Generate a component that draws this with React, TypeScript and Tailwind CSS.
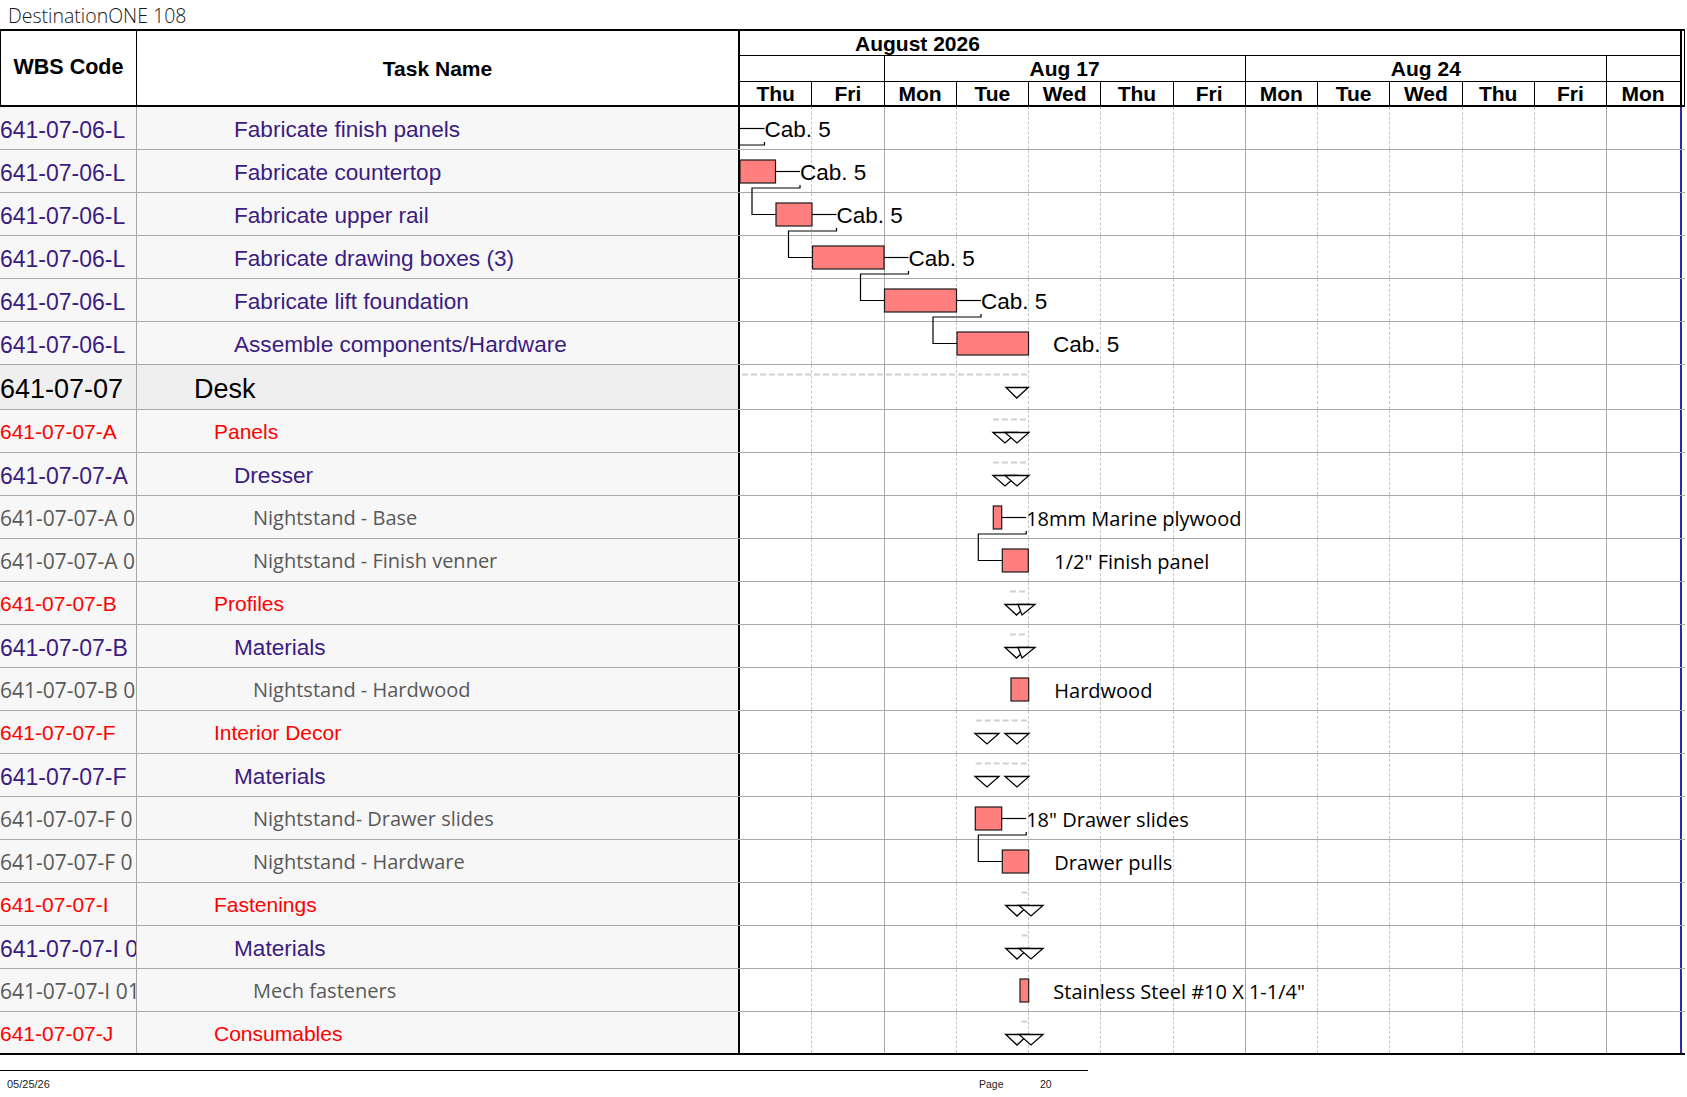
import React from 'react';

type Kind = 'p' | 'desk' | 'red' | 'gray';
type Row = { wbs: string; task: string; kind: Kind; h: number };

const rows: Row[] = [
  { wbs: '641-07-06-L', task: 'Fabricate finish panels', kind: 'p', h: 43 },
  { wbs: '641-07-06-L', task: 'Fabricate countertop', kind: 'p', h: 43 },
  { wbs: '641-07-06-L', task: 'Fabricate upper rail', kind: 'p', h: 43 },
  { wbs: '641-07-06-L', task: 'Fabricate drawing boxes (3)', kind: 'p', h: 43 },
  { wbs: '641-07-06-L', task: 'Fabricate lift foundation', kind: 'p', h: 43 },
  { wbs: '641-07-06-L', task: 'Assemble components/Hardware', kind: 'p', h: 43 },
  { wbs: '641-07-07', task: 'Desk', kind: 'desk', h: 45 },
  { wbs: '641-07-07-A', task: 'Panels', kind: 'red', h: 43 },
  { wbs: '641-07-07-A', task: 'Dresser', kind: 'p', h: 43 },
  { wbs: '641-07-07-A 0', task: 'Nightstand - Base', kind: 'gray', h: 43 },
  { wbs: '641-07-07-A 0', task: 'Nightstand - Finish venner', kind: 'gray', h: 43 },
  { wbs: '641-07-07-B', task: 'Profiles', kind: 'red', h: 43 },
  { wbs: '641-07-07-B', task: 'Materials', kind: 'p', h: 43 },
  { wbs: '641-07-07-B 0', task: 'Nightstand - Hardwood', kind: 'gray', h: 43 },
  { wbs: '641-07-07-F', task: 'Interior Decor', kind: 'red', h: 43 },
  { wbs: '641-07-07-F', task: 'Materials', kind: 'p', h: 43 },
  { wbs: '641-07-07-F 0', task: 'Nightstand- Drawer slides', kind: 'gray', h: 43 },
  { wbs: '641-07-07-F 0', task: 'Nightstand - Hardware', kind: 'gray', h: 43 },
  { wbs: '641-07-07-I', task: 'Fastenings', kind: 'red', h: 43 },
  { wbs: '641-07-07-I 01', task: 'Materials', kind: 'p', h: 43 },
  { wbs: '641-07-07-I 01', task: 'Mech fasteners', kind: 'gray', h: 43 },
  { wbs: '641-07-07-J', task: 'Consumables', kind: 'red', h: 43 },
];

const wbsClass: Record<Kind, string> = {
  p: "pt-[4px] text-[#3b1c80] text-[23px] font-['Liberation_Sans',Arial,sans-serif]",
  desk: "pt-[4px] text-black text-[27px] font-['Liberation_Sans',Arial,sans-serif]",
  red: "pt-[1px] text-[#ff0000] text-[21px] font-['Liberation_Sans',Arial,sans-serif]",
  gray: "pt-[2px] text-[#595959] text-[21px] font-['Open_Sans',sans-serif]",
};

const taskClass: Record<Kind, string> = {
  p: "pt-[4px] pl-[97px] text-[#3b1c80] text-[22.6px] font-['Liberation_Sans',Arial,sans-serif]",
  desk: "pt-[4px] pl-[57px] text-black text-[27px] font-['Liberation_Sans',Arial,sans-serif]",
  red: "pt-[1px] pl-[77px] text-[#ff0000] text-[21px] font-['Liberation_Sans',Arial,sans-serif]",
  gray: "pt-[2px] pl-[116px] text-[#595959] text-[20px] font-['Open_Sans',sans-serif]",
};

const days = ['Thu', 'Fri', 'Mon', 'Tue', 'Wed', 'Thu', 'Fri', 'Mon', 'Tue', 'Wed', 'Thu', 'Fri', 'Mon'];

// chart data (page x coordinates)
const bars: Record<number, [number, number]> = {
  1: [740, 775.5],
  2: [776, 812],
  3: [812.5, 884],
  4: [884.5, 956.5],
  5: [957, 1028.5],
  9: [993.3, 1001.7],
  10: [1002.3, 1028.3],
  13: [1011, 1028.7],
  16: [975.3, 1001.7],
  17: [1002.3, 1028.7],
  20: [1020, 1028.7],
};

type Label = { text: string; arial?: boolean; end: number; next?: number; x?: number };
const labels: Record<number, Label> = {
  0: { text: 'Cab. 5', arial: true, end: 740, next: 740 },
  1: { text: 'Cab. 5', arial: true, end: 775.5, next: 776 },
  2: { text: 'Cab. 5', arial: true, end: 812, next: 812.5 },
  3: { text: 'Cab. 5', arial: true, end: 884, next: 884.5 },
  4: { text: 'Cab. 5', arial: true, end: 956.5, next: 957 },
  5: { text: 'Cab. 5', arial: true, end: 1028.5, x: 1053 },
  9: { text: '18mm Marine plywood', end: 1001.7, next: 1002.3 },
  10: { text: '1/2" Finish panel', end: 1028.3, x: 1054.3 },
  13: { text: 'Hardwood', end: 1028.7, x: 1054.3 },
  16: { text: '18" Drawer slides', end: 1001.7, next: 1002.3 },
  17: { text: 'Drawer pulls', end: 1028.7, x: 1054.3 },
  20: { text: 'Stainless Steel #10 X 1-1/4"', end: 1028.7, x: 1053.3 },
};

type Summary = { dash: [number, number]; tris: [number, number, number][] };
const triPanels: [number, number, number][] = [
  [993, 1017, 1005],
  [1005, 1029, 1017],
];
const triProfiles: [number, number, number][] = [
  [1005, 1028, 1016.5],
  [1018, 1035, 1022],
];
const triDecor: [number, number, number][] = [
  [975, 999, 987],
  [1005, 1029, 1017],
];
const triFast: [number, number, number][] = [
  [1005.7, 1028.3, 1017],
  [1019, 1043, 1031],
];
const summaries: Record<number, Summary> = {
  6: { dash: [742, 1029], tris: [[1006, 1028.3, 1016.7]] },
  7: { dash: [993, 1029], tris: triPanels },
  8: { dash: [993, 1029], tris: triPanels },
  11: { dash: [1010, 1028], tris: triProfiles },
  12: { dash: [1010, 1028], tris: triProfiles },
  14: { dash: [975.7, 1029], tris: triDecor },
  15: { dash: [975.7, 1029], tris: triDecor },
  18: { dash: [1021.7, 1027.5], tris: triFast },
  19: { dash: [1021.7, 1027.5], tris: triFast },
  21: { dash: [1021.7, 1027.5], tris: triFast },
};

function Chart() {
  const tops: number[] = [];
  let acc = 0;
  rows.forEach((r) => {
    tops.push(acc);
    acc += r.h;
  });
  const total = acc;
  const els: React.ReactNode[] = [];
  rows.forEach((r, i) => {
    const T = tops[i];
    const c = T + 21.5;
    const s = summaries[i];
    if (s) {
      els.push(
        <line key={`d${i}`} x1={s.dash[0]} x2={s.dash[1]} y1={T + 9.5} y2={T + 9.5} stroke="#cfcfcf" strokeWidth={2} strokeDasharray="6 3" />
      );
      s.tris.forEach((t, k) => {
        els.push(
          <polygon
            key={`t${i}-${k}`}
            points={`${t[0]},${T + 22.5} ${t[1]},${T + 22.5} ${t[2]},${T + 33}`}
            fill="white"
            stroke="black"
            strokeWidth={1.3}
            strokeLinejoin="miter"
          />
        );
      });
    }
    const b = bars[i];
    if (b) {
      els.push(
        <rect key={`b${i}`} x={b[0]} y={T + 10} width={b[1] - b[0]} height={23} fill="#ff7f7f" stroke="#1a1a1a" strokeWidth={1.2} />
      );
    }
    const l = labels[i];
    if (l) {
      const fam = l.arial ? "'Liberation Sans', Arial, sans-serif" : "'Open Sans', sans-serif";
      const size = l.arial ? 22.5 : 20;
      if (l.next !== undefined) {
        const lx = l.end + 24.5;
        const back = l.next - 24;
        const nc = tops[i + 1] + 21.5;
        els.push(
          <polyline key={`l${i}`} points={`${l.end},${c} ${lx},${c}`} fill="none" stroke="black" strokeWidth={1.2} />
        );
        els.push(
          <polyline
            key={`k${i}`}
            points={`${lx},${T + 35} ${lx},${T + 38} ${back},${T + 38} ${back},${nc} ${l.next},${nc}`}
            fill="none"
            stroke="black"
            strokeWidth={1.2}
          />
        );
        els.push(
          <text key={`x${i}`} x={lx} y={c + 8} fontFamily={fam} fontSize={size} fill="black">
            {l.text}
          </text>
        );
      } else {
        els.push(
          <text key={`x${i}`} x={l.x} y={c + 8} fontFamily={fam} fontSize={size} fill="black">
            {l.text}
          </text>
        );
      }
    }
  });
  return (
    <svg className="absolute left-[740px] top-0 pointer-events-none" width={940} height={total} viewBox={`740 0 940 ${total}`}>
      {els}
    </svg>
  );
}

function Header() {
  return (
    <div className="flex h-[78px] w-[1685px] border-t-2 border-b-2 border-black font-bold text-[21px] leading-none font-['Liberation_Sans',Arial,sans-serif]">
      <div className="w-[137px] border-l border-r border-black flex items-center justify-center text-[21.5px]">WBS Code</div>
      <div className="w-[603px] border-r-2 border-black flex items-center justify-center">Task Name</div>
      <div className="w-[942px] border-r-2 border-black flex flex-col">
        <div className="h-[25px] border-b border-black flex items-center pl-[115px]">August 2026</div>
        <div className="h-[26px] border-b border-black grid grid-cols-[144.5px_361.25px_361.25px_1fr]">
          <div className="border-r border-black" />
          <div className="border-r border-black flex items-center justify-center">Aug 17</div>
          <div className="border-r border-black flex items-center justify-center">Aug 24</div>
          <div />
        </div>
        <div className="flex-1 grid grid-cols-[repeat(13,72.25px)]">
          {days.map((d, i) => (
            <div key={i} className={i === 12 ? 'flex items-center justify-center' : 'border-r border-black flex items-center justify-center'}>
              {d}
            </div>
          ))}
        </div>
      </div>
      <div className="w-[3px] border-r border-black" />
    </div>
  );
}

function Body() {
  return (
    <div className="relative w-[1685px]">
      {rows.map((r, i) => {
        const last = i === rows.length - 1;
        const bg = r.kind === 'desk' ? 'bg-[#efefef]' : 'bg-[#f7f7f7]';
        return (
          <div key={i} className={`flex ${r.h === 45 ? 'h-[45px]' : 'h-[43px]'} ${last ? 'border-b-2 border-black' : 'border-b border-[#a8a8a8]'}`}>
            <div className={`w-[137px] shrink-0 border-r border-[#a8a8a8] ${bg} overflow-hidden whitespace-nowrap flex items-center leading-none ${wbsClass[r.kind]}`}>
              {r.wbs}
            </div>
            <div className={`w-[603px] shrink-0 border-r-2 border-black ${bg} overflow-hidden whitespace-nowrap flex items-center leading-none ${taskClass[r.kind]}`}>
              {r.task}
            </div>
            <div className="w-[942px] shrink-0 border-r-2 border-[#2a2aa8] bg-white grid grid-cols-[repeat(13,72.25px)]">
              {days.map((_, d) => (
                <div
                  key={d}
                  className={
                    d === 12
                      ? 'h-full'
                      : d === 1 || d === 6 || d === 11
                      ? 'h-full border-r border-[#a8a8a8]'
                      : 'h-full border-r border-dashed border-[#c6c6c6]'
                  }
                />
              ))}
            </div>
          </div>
        );
      })}
      <Chart />
    </div>
  );
}

export default function App() {
  return (
    <div className="relative w-[1687px] h-[1097px] bg-white overflow-hidden text-black font-['Liberation_Sans',Arial,sans-serif]">
      <div className="h-[29px] pl-[8px] pt-[2px] flex items-center font-['Open_Sans',sans-serif] font-light text-[19.5px] text-[#1a1a1a] leading-none">
        DestinationONE 108
      </div>
      <Header />
      <Body />
      <div className="mt-[15px] w-[1088px] border-t border-black" />
      <div className="h-[27px] flex items-center text-[11px] leading-none text-[#222]">
        <span className="w-[979px] pl-[7px]">05/25/26</span>
        <span className="w-[61px] text-[10.5px]">Page</span>
        <span className="text-[10.5px]">20</span>
      </div>
    </div>
  );
}
